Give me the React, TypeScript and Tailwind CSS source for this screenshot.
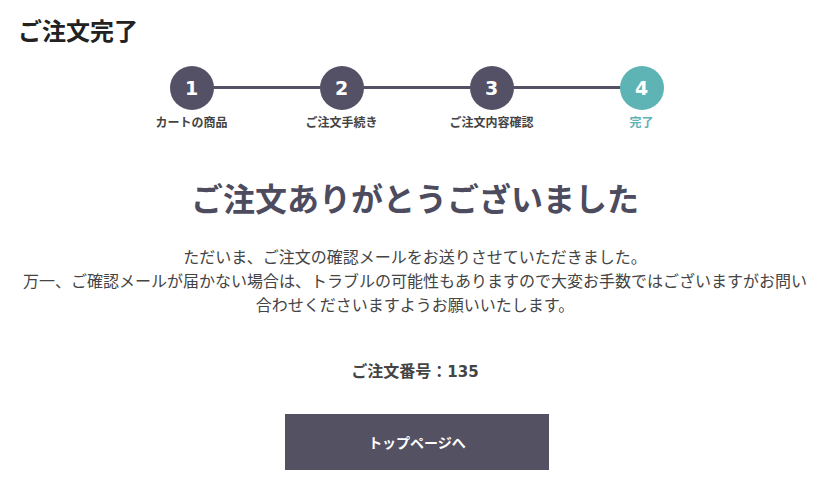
const steps = [
  { n: 1, label: "カートの商品" },
  { n: 2, label: "ご注文手続き" },
  { n: 3, label: "ご注文内容確認" },
  { n: 4, label: "完了", current: true },
];

export default function App() {
  return (
    <div className="w-[830px] h-[500px] bg-white font-['Noto_Sans_CJK_JP','Noto_Sans',sans-serif] text-[#444]">
      <h1 className="px-[18px] pt-[14px] text-[24px] leading-[32px] font-bold text-[#222]">ご注文完了</h1>

      <div className="mt-[20px] pl-[3px] flex justify-center">
        {steps.map((s, i) => (
          <div key={s.n} className="relative w-[150px] flex flex-col items-center">
            {i < steps.length - 1 && (
              <div className="absolute left-1/2 top-[20px] w-full h-[3px] bg-[#545166]" />
            )}
            <div
              className={
                "relative z-10 w-[44px] h-[44px] rounded-full flex items-center justify-center text-white text-[19px] font-bold leading-none font-['DejaVu_Sans',sans-serif] " +
                (s.current ? "bg-[#5eb3b4]" : "bg-[#545166]")
              }
            >
              {s.n}
            </div>
            <div
              className={
                "mt-[4px] text-[12px] leading-[16px] font-bold " +
                (s.current ? "text-[#5eb3b4]" : "text-[#444]")
              }
            >
              {s.label}
            </div>
          </div>
        ))}
      </div>

      <h2 className="mt-[45px] text-center text-[32px] leading-[44px] font-bold text-[#4d4b5e]">
        ご注文ありがとうございました
      </h2>

      <p className="mt-[25px] px-[20px] text-center text-[16px] leading-[24px] text-[#444]">
        ただいま、ご注文の確認メールをお送りさせていただきました。
        <br />
        万一、ご確認メールが届かない場合は、トラブルの可能性もありますので大変お手数ではございますがお問い合わせくださいますようお願いいたします。
      </p>

      <p className="mt-[42px] text-center text-[16px] leading-[24px] font-bold text-[#444]">
        ご注文番号：<span className="font-['DejaVu_Sans',sans-serif] text-[15px]">135</span>
      </p>

      <div className="mt-[30px] pl-[4px] flex justify-center">
        <button className="w-[264px] h-[56px] bg-[#545163] text-white text-[14px] font-bold">
          トップページへ
        </button>
      </div>
    </div>
  );
}
